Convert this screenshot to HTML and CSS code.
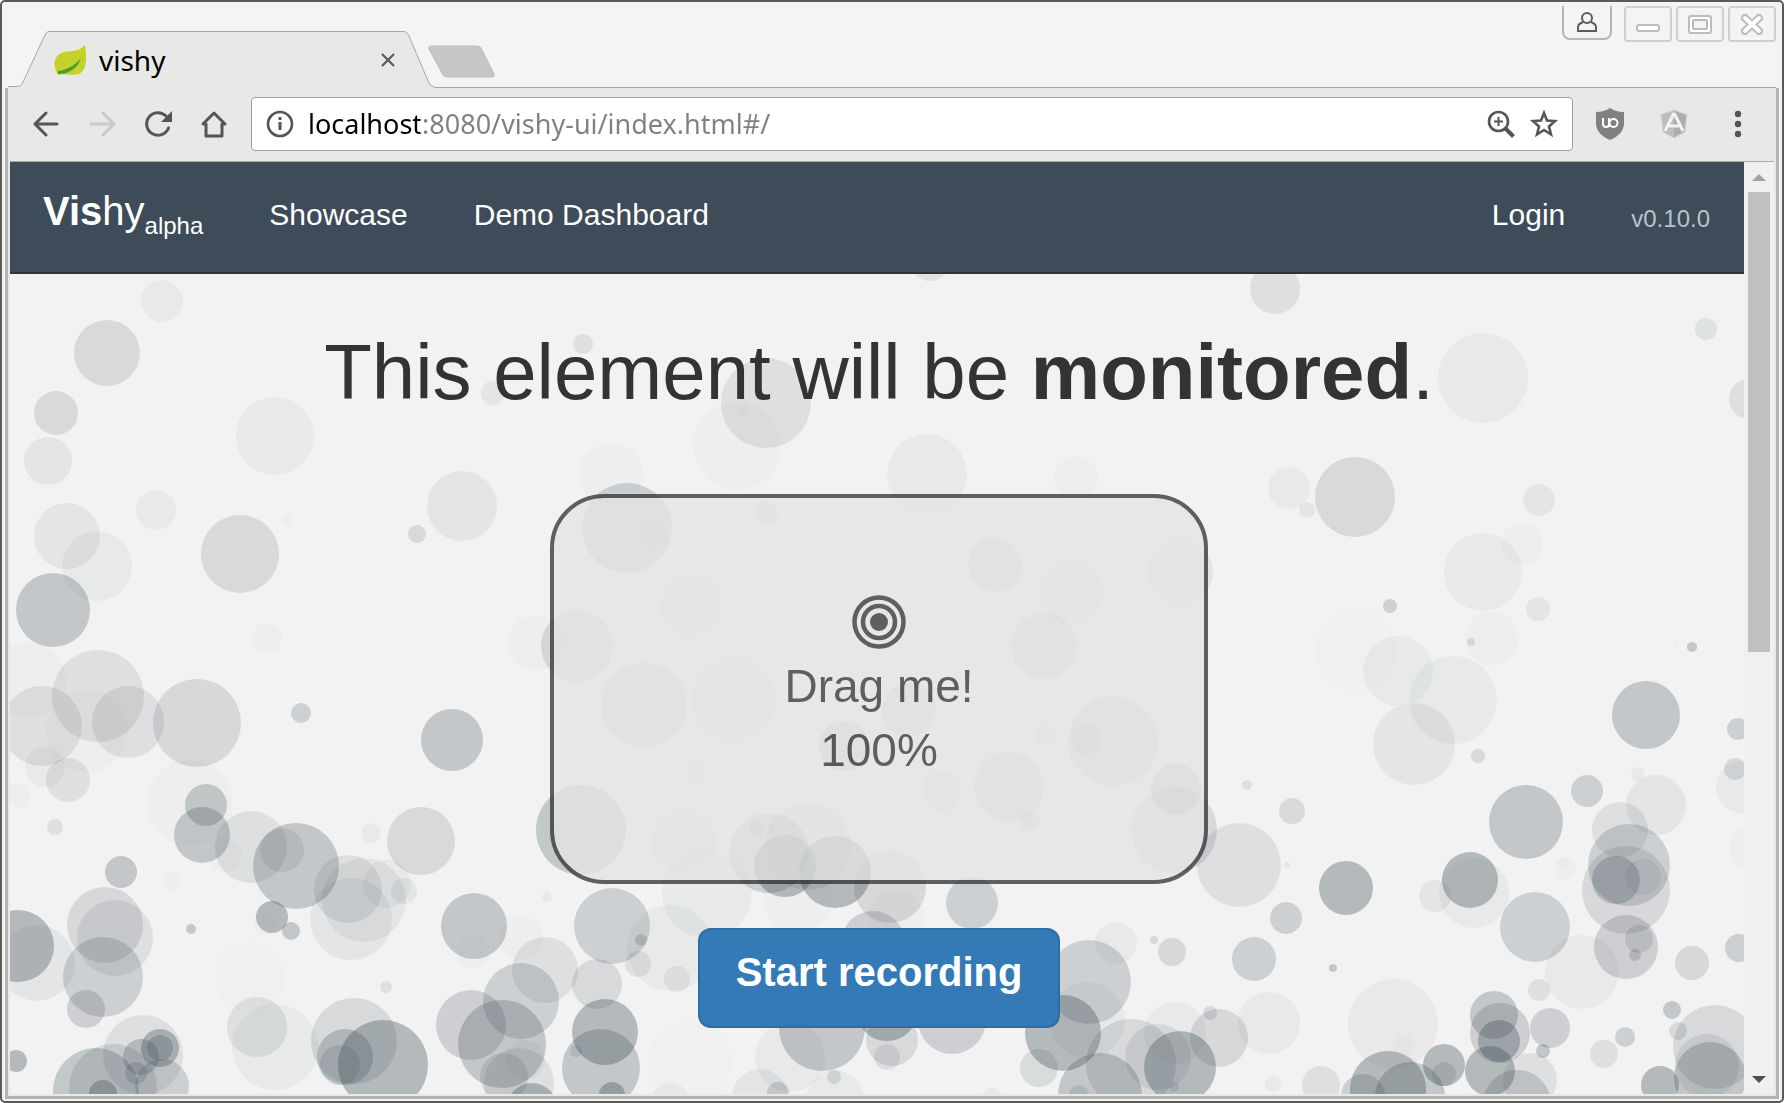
FILE: index.html
```html
<!DOCTYPE html>
<html lang="en">
<head>
<meta charset="utf-8">
<title>vishy</title>
<link rel="stylesheet" href="styles.css">
</head>
<body>
<div class="window">
  <header class="tabstrip">
    <div class="tab">
      <svg class="tab-shape" width="426" height="57" viewBox="0 0 426 57" aria-hidden="true"><path d="M0 55.5H10Q13 55.5 14.500 52L37 4Q38.500 .5 41 .5H396Q399 .5 400.500 4L421 52Q422.500 55.5 425 55.5H426V57H0Z" fill="#e8e8e7"/><path d="M0 55.500H10Q13 55.500 14.500 52L37 4Q38.500 .5 41 .5H396Q399 .5 400.500 4L421 52Q422.500 55.500 426 55.500" fill="none" stroke="#a6a6a4"/></svg>
      <svg width="32" height="32" viewBox="0 0 32 32" aria-hidden="true"><path d="M31 1C33 13 33 26 25 30C18 32 10 29 4 31C-1 24-1 13 7 9C15 6 24 9 31 1Z" fill="#c3d22b"/><path d="M4 27C13 26 22 21 27 14C24 24 15 30 4 30Z" fill="#4c9a30"/></svg>
      <span class="tab-title">vishy</span>
      <button class="plain close" aria-label="Close tab"><svg width="16" height="16" viewBox="0 0 16 16"><path d="M2 2L14 14M14 2L2 14" stroke="#5a5a5a" stroke-width="2.200"/></svg></button>
    </div>
    <button class="plain new-tab" aria-label="New tab"><svg width="68" height="33" viewBox="0 0 68 33"><path d="M3 1H49Q52 1 53 3L66 29Q67 32 64 32H19Q16 32 15 30L1 4Q0 1 3 1Z" fill="#c6c6c6" stroke="#bcbcbc"/></svg></button>
    <div class="window-buttons">
      <button class="plain user" aria-label="Profile"><svg width="22" height="22" viewBox="0 0 22 22" fill="none" stroke="#5c5c5c" stroke-width="2"><circle cx="11" cy="7" r="5"/><path d="M7 11Q2 13 2 16V20H20V16Q20 13 15 11"/></svg></button>
      <button class="plain wm" aria-label="Minimize"><svg width="24" height="24" viewBox="0 0 24 24"><rect x="1" y="13" width="22" height="6" rx="2" fill="#fff" stroke="#bcbcbb" stroke-width="2"/></svg></button>
      <button class="plain wm" aria-label="Maximize"><svg width="24" height="24" viewBox="0 0 24 24" fill="#fff" stroke="#bcbcbb" stroke-width="2"><rect x="1" y="4" width="22" height="17" rx="2"/><rect x="5" y="8" width="14" height="9" rx="1" fill="#f4f4f3"/></svg></button>
      <button class="plain wm" aria-label="Close"><svg width="24" height="24" viewBox="0 0 24 24" fill="none" stroke-linecap="round"><path d="M5 6L19 19M19 6L5 19" stroke="#bcbcbb" stroke-width="8"/><path d="M5 6L19 19M19 6L5 19" stroke="#fff" stroke-width="4"/></svg></button>
    </div>
  </header>

  <div class="frame">
    <div class="toolbar">
      <div class="history">
        <button class="plain" aria-label="Back"><svg width="28" height="28" viewBox="0 0 28 28" fill="none" stroke="#555" stroke-width="3" stroke-linecap="round"><path d="M14 3L3 14L14 25M3 14H25"/></svg></button>
        <button class="plain" aria-label="Forward"><svg width="28" height="28" viewBox="0 0 28 28" fill="none" stroke="#cacac9" stroke-width="3" stroke-linecap="round"><path d="M15 3L26 14L15 25M26 14H3"/></svg></button>
        <button class="plain" aria-label="Reload"><svg width="28" height="28" viewBox="0 0 28 28"><path d="M22 6A11.300 11.300 0 1 0 24.500 18" fill="none" stroke="#555" stroke-width="3" stroke-linecap="round"/><path d="M28 1V12H17Z" fill="#555"/></svg></button>
        <button class="plain" aria-label="Home"><svg width="28" height="28" viewBox="0 0 28 28" fill="none" stroke="#555" stroke-width="3" stroke-linejoin="round"><path d="M3 14L14 3L25 14H22V26H6V14Z"/></svg></button>
      </div>
      <form class="address">
        <svg width="28" height="28" viewBox="0 0 28 28" aria-hidden="true"><circle cx="14" cy="14" r="12" fill="none" stroke="#555" stroke-width="2.600"/><path d="M14 12V20M14 7V10" stroke="#555" stroke-width="3"/></svg>
        <input type="text" aria-label="Address" value="localhost:8080/vishy-ui/index.html#/">
        <button class="plain" type="button" aria-label="Zoom"><svg width="28" height="28" viewBox="0 0 28 28" fill="none" stroke="#555"><circle cx="11.500" cy="11.500" r="9.500" stroke-width="2.600"/><path d="M18.500 18.500L26.500 26.500" stroke-width="4"/><path d="M11.500 7V16M7 11.500H16" stroke-width="2"/></svg></button>
        <button class="plain" type="button" aria-label="Bookmark"><svg width="30" height="30" viewBox="0 0 30 30"><path d="M15 4L18 11.500L26 12L20 17.500L22 25.500L15 21L8 25.500L10 17.500L4 12L12 11.500Z" fill="none" stroke="#555" stroke-width="2.600"/></svg></button>
      </form>
      <div class="extensions">
        <button class="plain" aria-label="uBlock Origin"><svg width="28" height="32" viewBox="0 0 28 32"><path d="M14 0Q20 4 28 4V15Q28 26 14 32Q0 26 0 15V4Q8 4 14 0Z" fill="#808080"/><path d="M7 10V16Q7 19 10 19Q13 19 13 16V10M13 19V16" fill="none" stroke="#fff" stroke-width="2"/><circle cx="17.500" cy="15" r="4" fill="none" stroke="#fff" stroke-width="2"/></svg></button>
        <button class="plain" aria-label="AngularJS"><svg width="28" height="30" viewBox="0 0 28 30"><path d="M14 1L27 5.500L25 23L14 29L3 23L1 5.500Z" fill="#bdbdbd" stroke="#d4d4d4"/><path d="M14 2L26 6L24 22.500L14 28Z" fill="#acacac"/><path d="M14 4L5 22M14 4L23 22M9 17H19" fill="none" stroke="#f4f4f4" stroke-width="3"/></svg></button>
        <button class="plain" aria-label="Menu"><svg width="28" height="28" viewBox="0 0 28 28" fill="#555"><circle cx="14" cy="4" r="3.200"/><circle cx="14" cy="14" r="3.200"/><circle cx="14" cy="24" r="3.200"/></svg></button>
      </div>
    </div>

    <div class="viewport">
      <div class="page">
        <nav class="navbar">
          <a class="brand" href="#"><b>Vis</b>hy<sub>alpha</sub></a>
          <a href="#">Showcase</a>
          <a href="#">Demo Dashboard</a>
          <a class="login" href="#">Login</a>
          <span class="version">v0.10.0</span>
        </nav>
        <main class="showcase">
          <svg class="bubbles" viewBox="10 274 1734 820" preserveAspectRatio="xMidYMin slice" aria-hidden="true">
            <g class="green o1"><circle cx="737" cy="446" r="44"/><circle cx="798" cy="898" r="35"/><circle cx="1751" cy="849" r="22"/><circle cx="1566" cy="868" r="11"/><circle cx="1564" cy="862" r="5"/><circle cx="1492" cy="638" r="27"/><circle cx="29" cy="680" r="38"/><circle cx="87" cy="731" r="41"/><circle cx="190" cy="803" r="43"/><circle cx="172" cy="882" r="10"/><circle cx="265" cy="923" r="12"/><circle cx="473" cy="952" r="17"/><circle cx="521" cy="938" r="22"/><circle cx="611" cy="475" r="32"/></g>
            <g class="green o2"><circle cx="162" cy="301" r="21"/><circle cx="97" cy="566" r="35"/><circle cx="275" cy="436" r="39"/><circle cx="156" cy="510" r="20"/><circle cx="547" cy="897" r="5"/><circle cx="835" cy="1098" r="28"/><circle cx="1398" cy="671" r="35"/><circle cx="1742" cy="787" r="26"/><circle cx="371" cy="833" r="10"/><circle cx="275" cy="1047" r="43"/><circle cx="707" cy="893" r="45"/></g>
            <g class="green o4"><circle cx="930" cy="261" r="20"/><circle cx="942" cy="791" r="20"/><circle cx="1706" cy="329" r="11"/></g>
            <g class="green o5"><circle cx="995" cy="565" r="27"/><circle cx="644" cy="705" r="43"/><circle cx="1030" cy="821" r="10"/><circle cx="1009" cy="787" r="35"/><circle cx="1039" cy="1068" r="19"/></g>
            <g class="teal o7"><circle cx="581" cy="830" r="45"/><circle cx="206" cy="805" r="21"/><circle cx="96" cy="1091" r="43"/></g>

            <g class="gray o1"><circle cx="287" cy="520" r="5"/><circle cx="267" cy="638" r="15"/><circle cx="809" cy="615" r="35"/><circle cx="670" cy="830" r="42"/><circle cx="731" cy="780" r="19"/><circle cx="1522" cy="544" r="21"/><circle cx="535" cy="643" r="28"/><circle cx="743" cy="410" r="6"/><circle cx="1076" cy="478" r="22"/><circle cx="909" cy="653" r="42"/><circle cx="657" cy="757" r="40"/><circle cx="896" cy="917" r="28"/><circle cx="1404" cy="1046" r="11"/><circle cx="1676" cy="644" r="3"/><circle cx="18" cy="795" r="12"/><circle cx="225" cy="855" r="17"/></g>
            <g class="gray o0"><circle cx="690" cy="1063" r="42"/><circle cx="1356" cy="650" r="41"/><circle cx="250" cy="977" r="35"/></g>
            <g class="gray o2"><circle cx="927" cy="474" r="40"/><circle cx="733" cy="700" r="42"/><circle cx="684" cy="843" r="33"/><circle cx="1175" cy="1033" r="31"/><circle cx="1269" cy="1023" r="31"/><circle cx="1393" cy="1024" r="45"/><circle cx="1582" cy="972" r="37"/><circle cx="1474" cy="893" r="35"/><circle cx="1483" cy="378" r="45"/><circle cx="1483" cy="572" r="39"/><circle cx="790" cy="1057" r="35"/><circle cx="1116" cy="943" r="21"/></g>
            <g class="gray o3"><circle cx="67" cy="536" r="33"/><circle cx="1180" cy="572" r="33"/><circle cx="691" cy="605" r="31"/><circle cx="1046" cy="735" r="11"/><circle cx="1071" cy="591" r="32"/></g>
            <g class="gray o5"><circle cx="1113" cy="741" r="45"/><circle cx="1044" cy="646" r="33"/><circle cx="909" cy="710" r="27"/></g>

            <g class="mauve o5"><circle cx="890" cy="887" r="36"/><circle cx="1172" cy="952" r="14"/><circle cx="1219" cy="1038" r="29"/><circle cx="1692" cy="963" r="17"/><circle cx="1626" cy="890" r="44"/><circle cx="197" cy="723" r="44"/><circle cx="105" cy="925" r="38"/></g>
            <g class="mauve o6"><circle cx="952" cy="1020" r="34"/><circle cx="1500" cy="1033" r="30"/><circle cx="1550" cy="1028" r="20"/><circle cx="86" cy="1009" r="19"/><circle cx="471" cy="1025" r="35"/><circle cx="873" cy="943" r="32"/><circle cx="1626" cy="947" r="32"/></g>

            <g class="slate o2"><circle cx="653" cy="533" r="14"/><circle cx="696" cy="772" r="9"/><circle cx="670" cy="948" r="43"/><circle cx="670" cy="1103" r="20"/><circle cx="992" cy="1098" r="10"/><circle cx="1087" cy="1020" r="38"/><circle cx="1273" cy="1084" r="8"/><circle cx="1638" cy="774" r="7"/><circle cx="1453" cy="700" r="44"/><circle cx="1289" cy="488" r="21"/><circle cx="45" cy="767" r="20"/><circle cx="387" cy="884" r="24"/><circle cx="525" cy="1060" r="20"/></g>
            <g class="slate o3"><circle cx="48" cy="461" r="24"/><circle cx="462" cy="506" r="35"/><circle cx="493" cy="393" r="12"/><circle cx="677" cy="979" r="13"/><circle cx="760" cy="1097" r="28"/><circle cx="1643" cy="877" r="18"/><circle cx="1656" cy="805" r="30"/><circle cx="1435" cy="896" r="16"/><circle cx="1287" cy="865" r="3"/><circle cx="1307" cy="510" r="8"/><circle cx="1539" cy="500" r="16"/><circle cx="1538" cy="609" r="12"/><circle cx="364" cy="900" r="42"/><circle cx="351" cy="919" r="41"/><circle cx="404" cy="891" r="13"/><circle cx="37" cy="963" r="38"/><circle cx="1414" cy="744" r="41"/></g>
            <g class="slate o4"><circle cx="583" cy="344" r="10"/><circle cx="766" cy="403" r="45"/><circle cx="767" cy="513" r="11"/><circle cx="1086" cy="739" r="15"/><circle cx="808" cy="847" r="43"/><circle cx="757" cy="828" r="7"/><circle cx="771" cy="828" r="4"/><circle cx="638" cy="964" r="13"/><circle cx="887" cy="1057" r="13"/><circle cx="1158" cy="1057" r="33"/><circle cx="1530" cy="1080" r="27"/><circle cx="1539" cy="990" r="11"/><circle cx="1604" cy="1054" r="14"/><circle cx="1707" cy="1066" r="32"/><circle cx="1321" cy="1085" r="19"/><circle cx="1620" cy="830" r="28"/><circle cx="1247" cy="785" r="5"/><circle cx="1239" cy="865" r="42"/><circle cx="1275" cy="289" r="25"/><circle cx="1749" cy="399" r="20"/><circle cx="98" cy="696" r="46"/><circle cx="42" cy="726" r="40"/><circle cx="128" cy="722" r="36"/><circle cx="68" cy="780" r="22"/><circle cx="251" cy="847" r="36"/><circle cx="282" cy="850" r="22"/><circle cx="348" cy="889" r="34"/><circle cx="55" cy="827" r="8"/><circle cx="115" cy="938" r="38"/><circle cx="545" cy="970" r="33"/><circle cx="519" cy="1083" r="35"/><circle cx="386" cy="987" r="6"/><circle cx="257" cy="1027" r="30"/><circle cx="143" cy="1055" r="40"/></g>
            <g class="slate o5"><circle cx="107" cy="353" r="33"/><circle cx="56" cy="413" r="22"/><circle cx="240" cy="554" r="39"/><circle cx="577" cy="646" r="36"/><circle cx="1174" cy="830" r="43"/><circle cx="597" cy="984" r="25"/><circle cx="576" cy="1051" r="6"/><circle cx="892" cy="1040" r="26"/><circle cx="834" cy="1077" r="7"/><circle cx="1154" cy="940" r="4"/><circle cx="1079" cy="1095" r="10"/><circle cx="1131" cy="1064" r="45"/><circle cx="1174" cy="1087" r="5"/><circle cx="1210" cy="1013" r="7"/><circle cx="1444" cy="1074" r="12"/><circle cx="1678" cy="1031" r="9"/><circle cx="1715" cy="1047" r="42"/><circle cx="1639" cy="939" r="14"/><circle cx="1292" cy="811" r="13"/><circle cx="1478" cy="756" r="7"/><circle cx="1735" cy="769" r="11"/><circle cx="1355" cy="497" r="40"/><circle cx="1471" cy="642" r="4"/><circle cx="421" cy="841" r="34"/><circle cx="504" cy="1077" r="24"/><circle cx="354" cy="1041" r="43"/><circle cx="340" cy="1065" r="20"/><circle cx="113" cy="1088" r="44"/><circle cx="417" cy="534" r="9"/></g>
            <g class="slate o6"><circle cx="627" cy="528" r="45"/><circle cx="844" cy="746" r="25"/><circle cx="1176" cy="789" r="25"/><circle cx="769" cy="853" r="40"/><circle cx="972" cy="903" r="26"/><circle cx="612" cy="926" r="38"/><circle cx="641" cy="940" r="6"/><circle cx="778" cy="1093" r="11"/><circle cx="1089" cy="982" r="42"/><circle cx="1363" cy="1096" r="22"/><circle cx="1517" cy="1104" r="34"/><circle cx="1625" cy="1037" r="10"/><circle cx="1739" cy="948" r="14"/><circle cx="1635" cy="955" r="6"/><circle cx="1629" cy="865" r="41"/><circle cx="1587" cy="791" r="16"/><circle cx="1535" cy="927" r="35"/><circle cx="1286" cy="918" r="16"/><circle cx="1254" cy="959" r="22"/><circle cx="1738" cy="729" r="11"/><circle cx="1390" cy="606" r="7"/><circle cx="301" cy="713" r="10"/><circle cx="103" cy="977" r="40"/><circle cx="521" cy="1001" r="38"/><circle cx="136" cy="1073" r="11"/><circle cx="162" cy="1086" r="27"/></g>
            <g class="slate o7"><circle cx="53" cy="610" r="37"/><circle cx="601" cy="1068" r="39"/><circle cx="822" cy="1028" r="43"/><circle cx="1100" cy="1095" r="42"/><circle cx="1410" cy="1097" r="35"/><circle cx="1494" cy="1015" r="24"/><circle cx="1543" cy="1051" r="7"/><circle cx="1672" cy="1010" r="9"/><circle cx="1710" cy="1078" r="36"/><circle cx="1616" cy="880" r="24"/><circle cx="1526" cy="822" r="37"/><circle cx="1333" cy="968" r="4"/><circle cx="1646" cy="715" r="34"/><circle cx="1692" cy="647" r="5"/><circle cx="202" cy="835" r="28"/><circle cx="296" cy="866" r="43"/><circle cx="452" cy="740" r="31"/><circle cx="121" cy="872" r="16"/><circle cx="191" cy="929" r="5"/><circle cx="291" cy="931" r="9"/><circle cx="474" cy="926" r="33"/><circle cx="502" cy="1044" r="44"/><circle cx="345" cy="1057" r="28"/><circle cx="141" cy="1057" r="18"/><circle cx="160" cy="1048" r="13"/></g>
            <g class="slate o8"><circle cx="785" cy="866" r="31"/><circle cx="835" cy="872" r="36"/><circle cx="605" cy="1032" r="33"/><circle cx="612" cy="1095" r="13"/><circle cx="887" cy="1010" r="31"/><circle cx="1063" cy="1033" r="38"/><circle cx="1180" cy="1067" r="36"/><circle cx="1388" cy="1089" r="38"/><circle cx="1444" cy="1065" r="21"/><circle cx="1499" cy="1041" r="21"/><circle cx="1490" cy="1071" r="25"/><circle cx="1660" cy="1085" r="19"/><circle cx="1470" cy="880" r="28"/><circle cx="1346" cy="888" r="27"/><circle cx="18" cy="946" r="36"/><circle cx="272" cy="917" r="16"/><circle cx="532" cy="1108" r="25"/><circle cx="383" cy="1065" r="45"/><circle cx="160" cy="1048" r="19"/><circle cx="103" cy="1094" r="14"/><circle cx="16" cy="1061" r="11"/></g>
          </svg>
          <h1>This element will be <b>monitored</b>.</h1>
          <section class="drag-box">
            <svg width="54" height="54" viewBox="0 0 54 54" fill="none" stroke="#333" stroke-width="4.500" aria-hidden="true"><circle cx="27" cy="27" r="24.500"/><circle cx="27" cy="27" r="16"/><circle cx="27" cy="27" r="9" fill="#333" stroke="none"/></svg>
            <span>Drag me!</span>
            <span>100%</span>
          </section>
          <button class="record">Start recording</button>
        </main>
      </div>
      <div class="scrollbar" aria-hidden="true">
        <svg width="14" height="7" viewBox="0 0 14 7"><path d="M7 0L14 7H0Z" fill="#a3a3a3"/></svg>
        <div class="thumb"></div>
        <div></div>
        <svg width="14" height="7" viewBox="0 0 14 7"><path d="M0 0H14L7 7Z" fill="#505050"/></svg>
      </div>
    </div>
  </div>
</div>
</body>
</html>
```
FILE: styles.css
```css
* { box-sizing: border-box; }

body {
  margin: 0;
  background: #fff;
  font-family: "Liberation Sans", Arial, sans-serif;
  color: #333;
}

.plain {
  display: flex;
  align-items: center;
  justify-content: center;
  padding: 0;
  border: 0;
  background: none;
}

svg { display: block; flex: none; }

/* browser window */
.window {
  display: flex;
  flex-direction: column;
  height: 100vh;
  padding: 0 3px 2px;
  border: 2px solid #5a5a5a;
  border-radius: 5px;
  background: #f4f4f3;
}

.tabstrip {
  display: flex;
  flex: none;
  align-items: flex-end;
  height: 86px;
  margin: 0 3px;
  box-shadow: inset 0 -1px #a6a6a4;
}

.tab {
  position: relative;
  display: flex;
  align-items: center;
  gap: 13px;
  width: 426px;
  height: 57px;
  padding: 0 38px 0 46px;
}

.tab > * { position: relative; }

.tab > .tab-shape {
  position: absolute;
  top: 0;
  left: 0;
}

.tab-title {
  flex: 1;
  font: 28px "Noto Sans", sans-serif;
  color: #000;
}

.new-tab { align-self: flex-end; margin: 0 0 10px -6px; }

.window-buttons {
  display: flex;
  align-self: flex-start;
  gap: 4px;
  margin: 4px 0 0 auto;
}

.user {
  width: 50px;
  height: 34px;
  margin-right: 8px;
  border: 2px solid #b5b5b4;
  border-top: 0;
  border-radius: 0 0 8px 8px;
}

.wm {
  width: 48px;
  height: 36px;
  border: 2px solid #cfcfce;
  border-radius: 4px;
}

.frame {
  display: flex;
  flex: 1;
  flex-direction: column;
  min-height: 0;
  padding: 0 2px 2px;
  border: 3px solid #b4b4b2;
  border-top: 0;
  background: #e8e8e7;
}

/* toolbar */
.toolbar {
  display: flex;
  flex: none;
  align-items: center;
  gap: 23px;
  height: 74px;
  padding: 0 22px 2px;
  border-bottom: 1px solid #a9a9a8;
}

.history { display: flex; gap: 28px; }

.address {
  display: flex;
  flex: 1;
  align-items: center;
  gap: 14px;
  height: 54px;
  padding: 0 13px 0 14px;
  border: 1px solid #a0a0a0;
  border-radius: 4px;
  background: #fff;
}

.address input {
  flex: 1;
  min-width: 0;
  padding: 0;
  border: 0;
  outline: 0;
  font: 27px "Noto Sans", sans-serif;
  color: transparent;
  background: linear-gradient(90deg, #000 112px, #808080 112px);
  background-clip: text;
}

.extensions {
  display: flex;
  align-items: center;
  gap: 36px;
}

/* page and scrollbar */
.viewport {
  display: flex;
  flex: 1;
  min-height: 0;
}

.page {
  display: flex;
  flex: 1;
  flex-direction: column;
  min-width: 0;
  overflow: hidden;
  background: #f2f2f2;
}

.scrollbar {
  display: grid;
  grid-template-rows: 30px 460fr 412fr 30px;
  width: 30px;
  padding: 0 4px;
  background: #f0f0f0;
}

.scrollbar svg { place-self: center; }

.thumb { background: #c0c0c0; }

/* navbar */
.navbar {
  display: flex;
  flex: none;
  align-items: baseline;
  gap: 66px;
  height: 112px;
  padding: 27px 34px 0 33px;
  border-bottom: 2px solid #333;
  background: #3e4b58;
  font-size: 30px;
}

.navbar a { color: #fff; text-decoration: none; }

.navbar .brand { font-size: 40px; }

.brand sub {
  font-size: 24px;
  line-height: 1;
}

.login { margin-left: auto; }

.version {
  align-self: flex-start;
  margin-top: 16px;
  font-size: 24px;
  color: #b9c3ca;
}

/* showcase */
.showcase {
  position: relative;
  display: flex;
  flex: 1;
  flex-direction: column;
  align-items: center;
  padding: 53px 0 0 4px;
}

.showcase > * { position: relative; }

.showcase > .bubbles {
  position: absolute;
  inset: 0;
  width: 100%;
  height: 100%;
}

h1 {
  margin: 0 0 77px;
  font-size: 78px;
  font-weight: 400;
  line-height: 90px;
}

.drag-box {
  display: flex;
  flex: none;
  flex-direction: column;
  align-items: center;
  width: 38%;
  height: 390px;
  padding: 97px 0 0;
  border: 4px solid #333;
  border-radius: 54px;
  background: #e5e5e5;
  font-size: 46px;
  line-height: 64px;
  opacity: .77;
}

.drag-box svg { margin-bottom: 5px; }

.record {
  height: 100px;
  margin-top: 44px;
  padding: 0 36px 12px;
  border: 2px solid #2e6da4;
  border-radius: 13px;
  background: #337ab7;
  color: #fff;
  font: bold 40px "Liberation Sans", Arial, sans-serif;
}

/* bubbles: hue and strength */
.slate { fill: #3e4c56; }
.mauve { fill: #46465a; }
.gray { fill: #484848; }
.green { fill: #42605a; }
.teal { fill: #3c5256; }
.o0 circle { fill-opacity: .01; }
.o1 circle { fill-opacity: .025; }
.o2 circle { fill-opacity: .05; }
.o3 circle { fill-opacity: .08; }
.o4 circle { fill-opacity: .11; }
.o5 circle { fill-opacity: .15; }
.o6 circle { fill-opacity: .2; }
.o7 circle { fill-opacity: .26; }
.o8 circle { fill-opacity: .34; }
```
